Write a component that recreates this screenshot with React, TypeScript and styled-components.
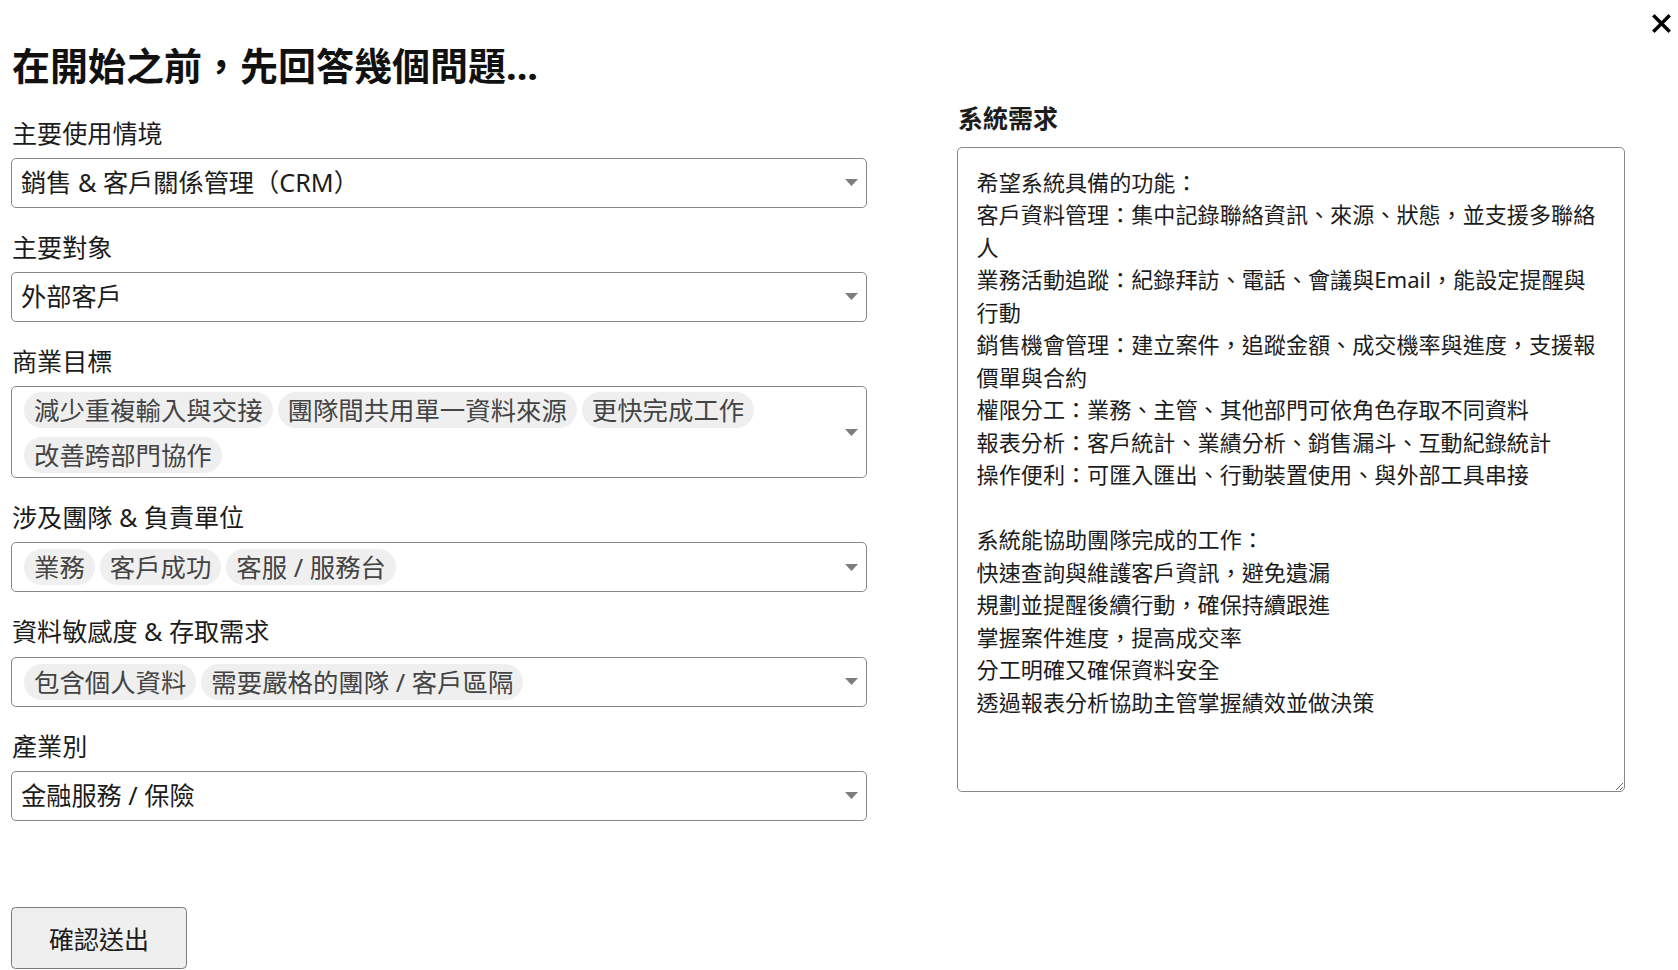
import React from "react";
import styled, { createGlobalStyle } from "styled-components";

const FONT = `"Noto Sans", "Noto Sans CJK TC", sans-serif`;

const GlobalStyle = createGlobalStyle`
  html, body { margin: 0; padding: 0; background: #ffffff; }
  body {
    font-family: ${FONT};
    color: #1c1c1c;
  }
  * { box-sizing: border-box; }
`;

const Modal = styled.div`
  position: relative;
  width: 1678px;
  height: 970px;
  overflow: hidden;
  padding: 43px 0 0 11px;
  display: grid;
  grid-template-columns: 856px 668px;
  column-gap: 90px;
  align-items: start;
`;

const CloseButton = styled.button`
  position: absolute;
  top: 14px;
  right: 7px;
  width: 19px;
  height: 19px;
  padding: 0;
  border: none;
  background: transparent;
  display: flex;
  align-items: center;
  justify-content: center;
  cursor: pointer;
`;

const LeftColumn = styled.div`
  display: flex;
  flex-direction: column;
`;

const Title = styled.h2`
  margin: 0 0 26.5px;
  font-size: 38px;
  line-height: 45px;
  font-weight: 700;
  color: #111;
  padding-left: 1px;
`;

const Field = styled.div`
  display: flex;
  flex-direction: column;
  gap: 6px;
  & + & {
    margin-top: 21px;
  }
`;

const Label = styled.label`
  font-size: 25.1px;
  line-height: 37.2px;
  color: #1c1c1c;
  padding-left: 1px;
`;

const SelectBox = styled.div<{ $multi?: boolean }>`
  display: flex;
  align-items: center;
  min-height: 50px;
  border: 1.5px solid #878787;
  border-radius: 5px;
  background: #fff;
  padding: ${(p) => (p.$multi ? "4.5px 8px 4.5px 12px" : "0 8px 0 9px")};
`;

const Value = styled.div`
  flex: 1;
  font-size: 25.2px;
  line-height: 37px;
  color: #1c1c1c;
  white-space: nowrap;
`;

const ChipList = styled.div`
  flex: 1;
  display: flex;
  flex-wrap: wrap;
  gap: 9px 5px;
`;

const Chip = styled.span`
  height: 36px;
  padding: 0 10px;
  border-radius: 18px;
  background: #efefef;
  color: #444;
  font-size: 25.4px;
  line-height: 36px;
  white-space: nowrap;
`;

const Arrow = styled.svg`
  flex: none;
  width: 13px;
  height: 7px;
  margin-left: 8px;
`;

const SubmitButton = styled.button`
  margin-top: 86px;
  width: 176px;
  height: 62px;
  padding: 0;
  border: 1.5px solid #7a7a7a;
  border-radius: 4.5px;
  background: #efefef;
  font-family: inherit;
  font-size: 25px;
  color: #1c1c1c;
  cursor: pointer;
  align-self: flex-start;
`;

const RightColumn = styled.div`
  display: flex;
  flex-direction: column;
  padding-top: 57px;
  gap: 10px;
`;

const SectionLabel = styled.label`
  font-size: 25px;
  line-height: 37.2px;
  font-weight: 700;
  color: #1c1c1c;
  padding-left: 1px;
`;

const Requirements = styled.textarea`
  width: 668px;
  height: 645px;
  border: 1.5px solid #878787;
  border-radius: 5px;
  padding: 17.5px 22px 18px 18.6px;
  font-family: ${FONT};
  font-size: 22.1px;
  line-height: 32.5px;
  color: #1c1c1c;
  background: #fff;
  resize: vertical;
  outline: none;
`;

const DownArrow = () => (
  <Arrow viewBox="0 0 13 7" aria-hidden="true">
    <path d="M0 0 H13 L6.5 7 Z" fill="#7d7d7d" />
  </Arrow>
);

type FieldDef = { label: string; value?: string; chips?: string[] };

const fields: FieldDef[] = [
  { label: "主要使用情境", value: "銷售 & 客戶關係管理（CRM）" },
  { label: "主要對象", value: "外部客戶" },
  {
    label: "商業目標",
    chips: ["減少重複輸入與交接", "團隊間共用單一資料來源", "更快完成工作", "改善跨部門協作"],
  },
  { label: "涉及團隊 & 負責單位", chips: ["業務", "客戶成功", "客服 / 服務台"] },
  { label: "資料敏感度 & 存取需求", chips: ["包含個人資料", "需要嚴格的團隊 / 客戶區隔"] },
  { label: "產業別", value: "金融服務 / 保險" },
];

const requirementsText = [
  "希望系統具備的功能：",
  "客戶資料管理：集中記錄聯絡資訊、來源、狀態，並支援多聯絡人",
  "業務活動追蹤：紀錄拜訪、電話、會議與Email，能設定提醒與行動",
  "銷售機會管理：建立案件，追蹤金額、成交機率與進度，支援報價單與合約",
  "權限分工：業務、主管、其他部門可依角色存取不同資料",
  "報表分析：客戶統計、業績分析、銷售漏斗、互動紀錄統計",
  "操作便利：可匯入匯出、行動裝置使用、與外部工具串接",
  "",
  "系統能協助團隊完成的工作：",
  "快速查詢與維護客戶資訊，避免遺漏",
  "規劃並提醒後續行動，確保持續跟進",
  "掌握案件進度，提高成交率",
  "分工明確又確保資料安全",
  "透過報表分析協助主管掌握績效並做決策",
].join("\n");

export default function App() {
  return (
    <>
      <GlobalStyle />
      <Modal>
        <CloseButton aria-label="關閉">
          <svg width="19" height="19" viewBox="0 0 19 19" aria-hidden="true">
            <path d="M2.5 2.5 L16.5 16.5 M16.5 2.5 L2.5 16.5" stroke="#000" strokeWidth="3.4" strokeLinecap="square" />
          </svg>
        </CloseButton>
        <LeftColumn>
          <Title>在開始之前，先回答幾個問題...</Title>
          {fields.map((f) => (
            <Field key={f.label}>
              <Label>{f.label}</Label>
              <SelectBox $multi={!!f.chips} role="combobox">
                {f.chips ? (
                  <ChipList>
                    {f.chips.map((c) => (
                      <Chip key={c}>{c}</Chip>
                    ))}
                  </ChipList>
                ) : (
                  <Value>{f.value}</Value>
                )}
                <DownArrow />
              </SelectBox>
            </Field>
          ))}
          <SubmitButton>確認送出</SubmitButton>
        </LeftColumn>
        <RightColumn>
          <SectionLabel>系統需求</SectionLabel>
          <Requirements defaultValue={requirementsText} />
        </RightColumn>
      </Modal>
    </>
  );
}
